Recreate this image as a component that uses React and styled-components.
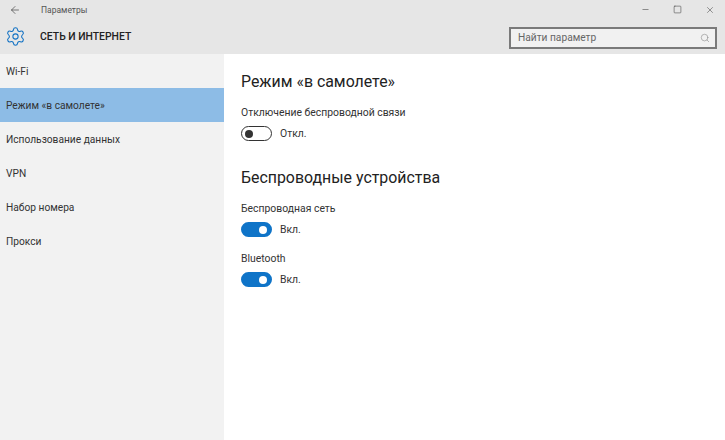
import React from "react";
import styled, { createGlobalStyle } from "styled-components";
import { ArrowLeft, Minus, Square, X, Search, Settings } from "lucide-react";

const GlobalStyle = createGlobalStyle`
  html, body {
    margin: 0;
    padding: 0;
    background: #fff;
  }
  body {
    font-family: Roboto, "Open Sans", sans-serif;
    color: #222;
  }
`;

const Page = styled.div`
  width: 725px;
  height: 440px;
  display: flex;
  flex-direction: column;
  overflow: hidden;
`;

const Header = styled.header`
  height: 54px;
  flex: none;
  background: #e6e6e6;
  display: flex;
  flex-direction: column;
`;

const TitleBar = styled.div`
  height: 19px;
  display: flex;
  align-items: center;
  padding-left: 9px;
  color: #444;
`;

const WindowTitle = styled.span`
  margin-left: 20px;
  font-size: 8.5px;
  color: #555;
  flex: 1;
`;

const WindowButtons = styled.div`
  display: flex;
  align-items: center;
  gap: 23px;
  padding-right: 10px;
  color: #444;
`;

const SectionBar = styled.div`
  height: 35px;
  display: flex;
  align-items: center;
  padding: 0 8px 0 5px;
`;

const SectionName = styled.h1`
  margin: 0 0 0 14px;
  font-size: 10.4px;
  font-weight: 500;
  color: #222;
  flex: 1;
`;

const SearchBox = styled.div`
  width: 208px;
  height: 22px;
  margin-top: 2px;
  box-sizing: border-box;
  border: 2px solid #7a7a7a;
  background: #f1f1f1;
  display: flex;
  align-items: center;
  padding: 0 5px 0 7px;
  font-size: 10.2px;
  color: #666;
  justify-content: space-between;
`;

const Body = styled.div`
  flex: 1;
  display: flex;
  min-height: 0;
`;

const Sidebar = styled.nav`
  width: 224px;
  flex: none;
  background: #f2f2f2;
`;

const NavItem = styled.div`
  height: 34px;
  display: flex;
  align-items: center;
  padding-left: 6px;
  font-size: 10.2px;
  color: #333;
  background: ${(p) => (p.$active ? "#8dbce6" : "transparent")};
`;

const Main = styled.main`
  flex: 1;
  background: #fff;
  padding: 16px 0 0 17px;
`;

const Heading = styled.h2`
  margin: 0 0 ${(p) => p.$after}px;
  font-size: 15.9px;
  line-height: 24px;
  font-weight: 400;
  color: #222;
`;

const Label = styled.div`
  font-size: 10.4px;
  line-height: 14px;
  color: #333;
  margin-bottom: 6px;
`;

const ToggleRow = styled.div`
  display: flex;
  align-items: center;
  gap: 8px;
  height: 15px;
  margin-bottom: ${(p) => p.$after}px;
  font-size: 10.4px;
  color: #333;
`;

const Track = styled.div`
  width: 31px;
  height: 15px;
  box-sizing: border-box;
  border-radius: 8px;
  border: ${(p) => (p.$on ? "2px solid #0f74c8" : "1.5px solid #333")};
  background: ${(p) => (p.$on ? "#0f74c8" : "#fff")};
  display: flex;
  align-items: center;
  justify-content: ${(p) => (p.$on ? "flex-end" : "flex-start")};
  padding: 0 3px;
`;

const Knob = styled.div`
  width: 8px;
  height: 8px;
  border-radius: 50%;
  background: ${(p) => (p.$on ? "#fff" : "#333")};
`;

function Toggle({ on, after }) {
  return (
    <ToggleRow $after={after}>
      <Track $on={on}>
        <Knob $on={on} />
      </Track>
      {on ? "Вкл." : "Откл."}
    </ToggleRow>
  );
}

const items = ["Wi-Fi", "Режим «в самолете»", "Использование данных", "VPN", "Набор номера", "Прокси"];

export default function App() {
  return (
    <Page>
      <GlobalStyle />
      <Header>
        <TitleBar>
          <ArrowLeft size={12} strokeWidth={1.4} />
          <WindowTitle>Параметры</WindowTitle>
          <WindowButtons>
            <Minus size={9} strokeWidth={1.5} />
            <Square size={9} strokeWidth={1.5} />
            <X size={10} strokeWidth={1.3} />
          </WindowButtons>
        </TitleBar>
        <SectionBar>
          <Settings size={21} strokeWidth={1.2} color="#1272c4" />
          <SectionName>СЕТЬ И ИНТЕРНЕТ</SectionName>
          <SearchBox>
            Найти параметр
            <Search size={10} strokeWidth={1.4} color="#888" />
          </SearchBox>
        </SectionBar>
      </Header>
      <Body>
        <Sidebar>
          {items.map((item, i) => (
            <NavItem key={item} $active={i === 1}>{item}</NavItem>
          ))}
        </Sidebar>
        <Main>
          <Heading $after={12}>Режим «в самолете»</Heading>
          <Label>Отключение беспроводной связи</Label>
          <Toggle on={false} after={25} />
          <Heading $after={12}>Беспроводные устройства</Heading>
          <Label>Беспроводная сеть</Label>
          <Toggle on after={15} />
          <Label>Bluetooth</Label>
          <Toggle on after={0} />
        </Main>
      </Body>
    </Page>
  );
}
